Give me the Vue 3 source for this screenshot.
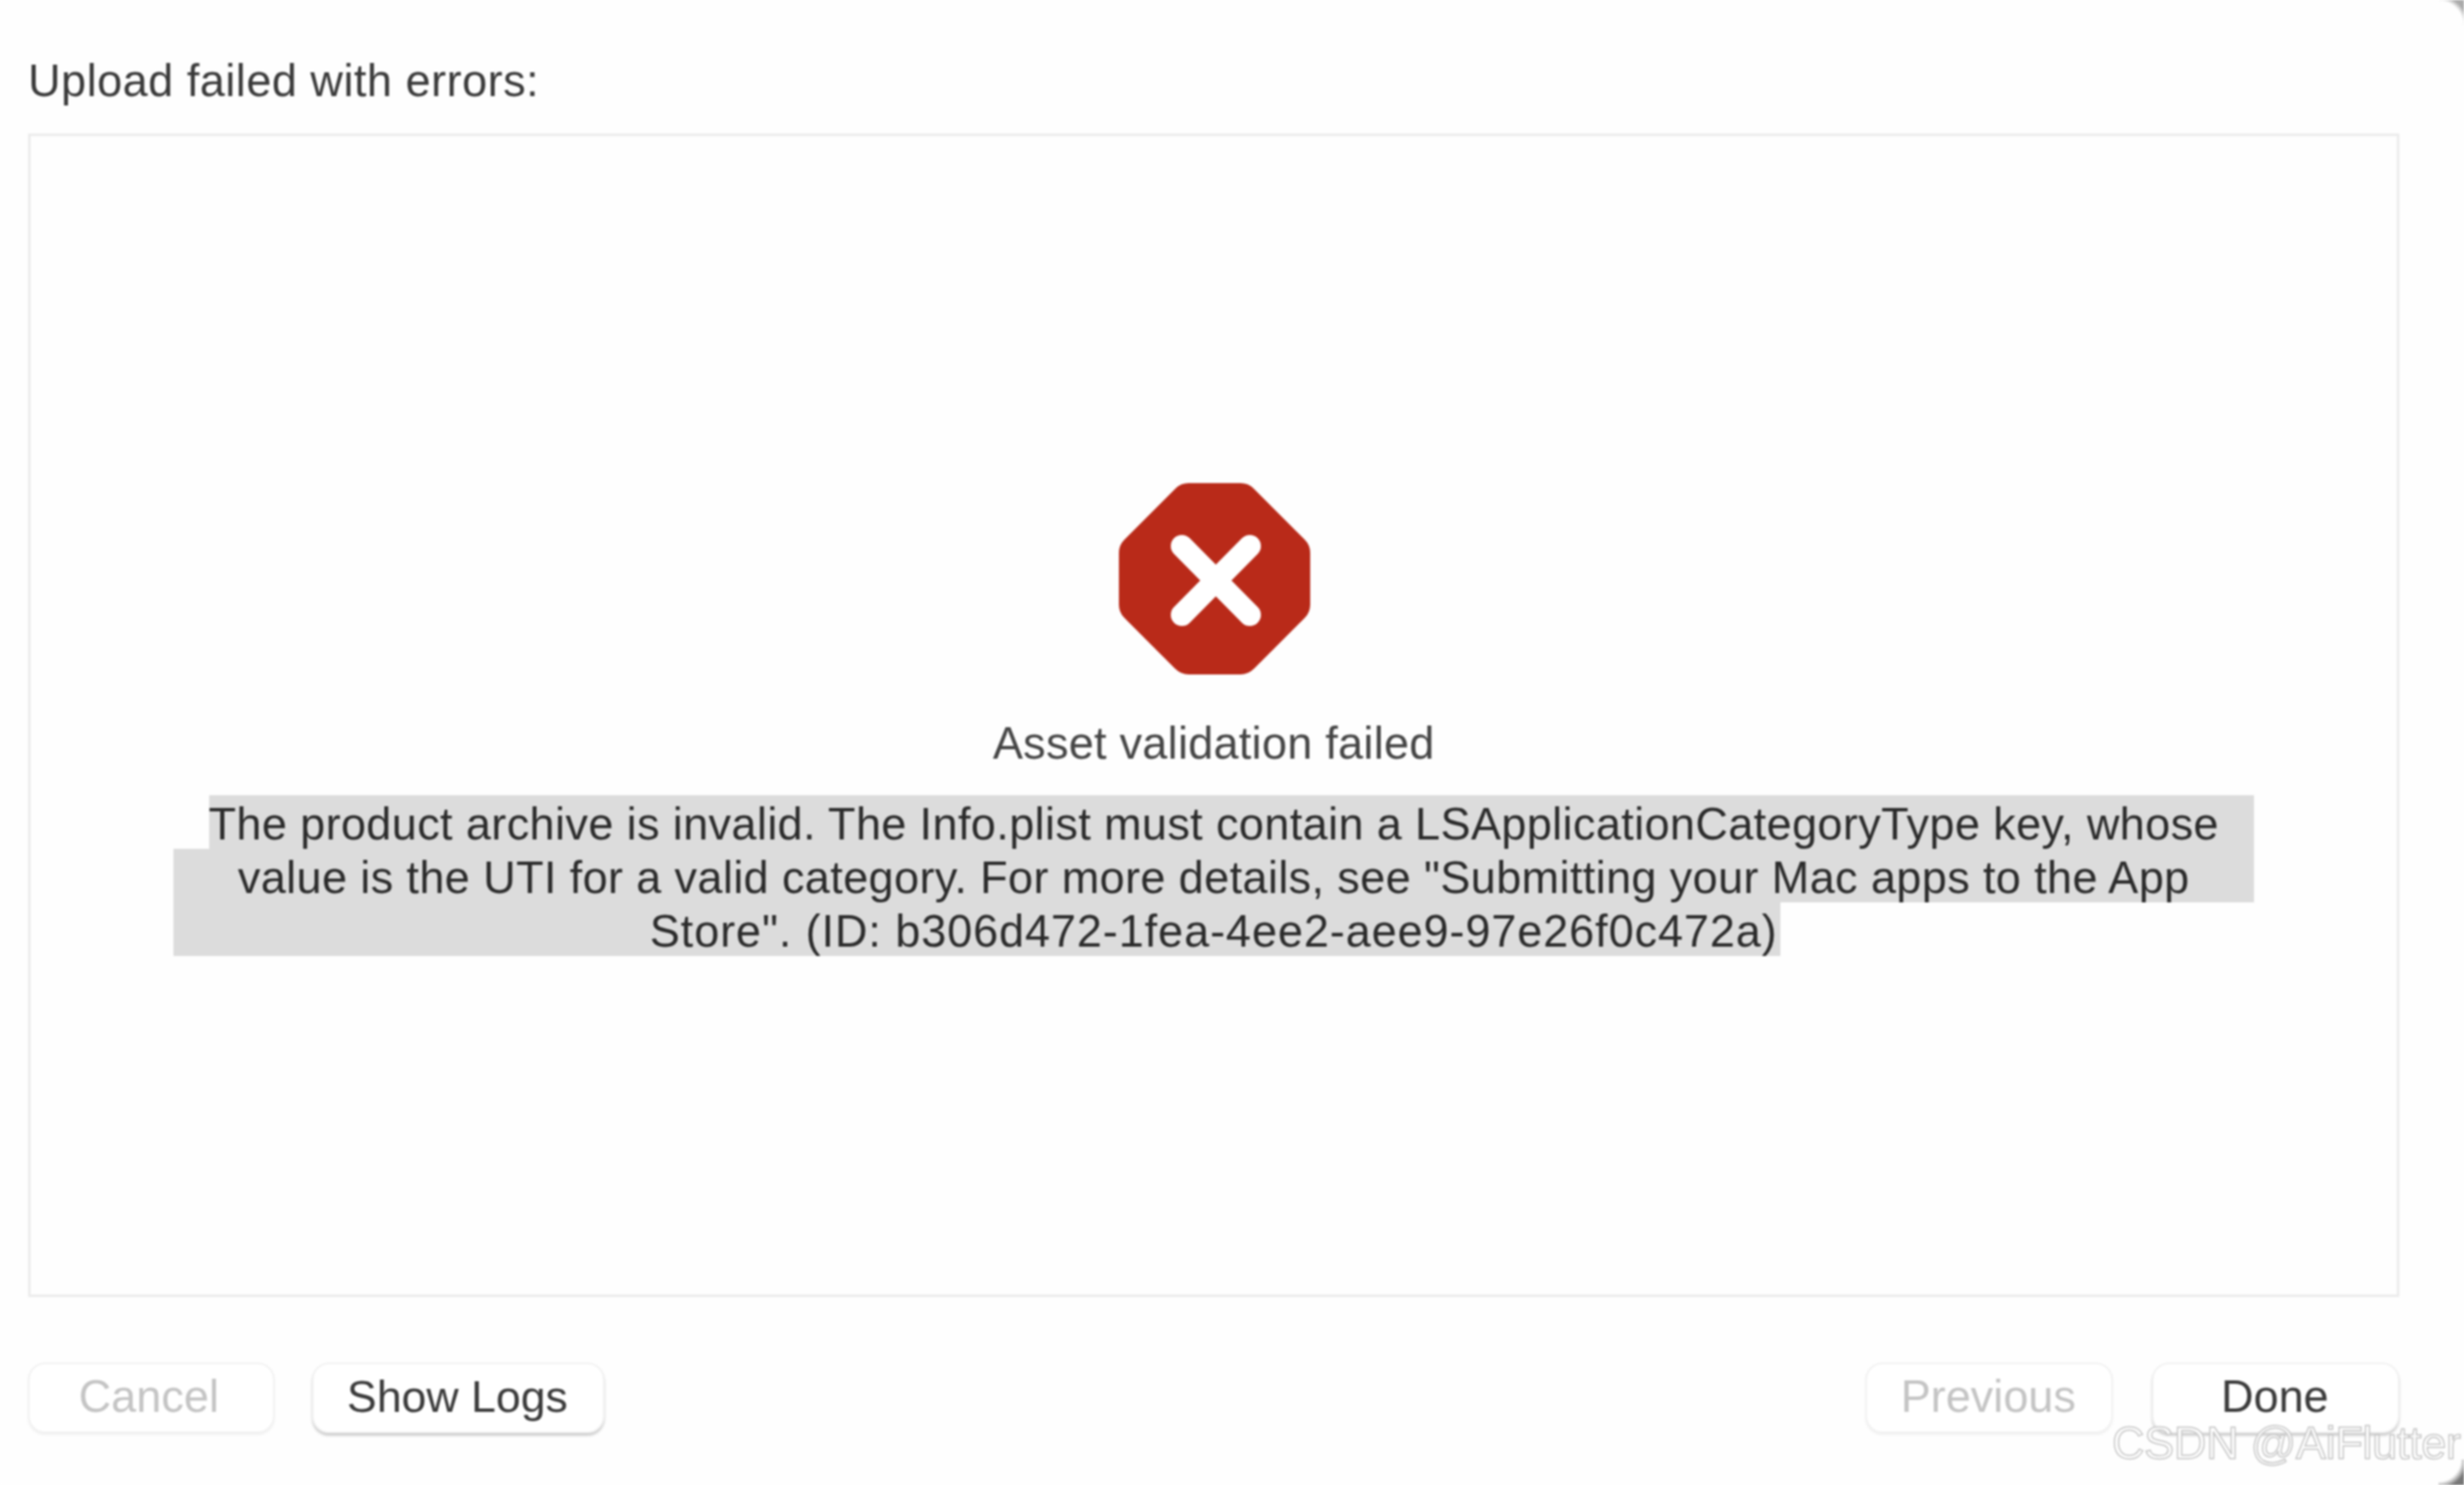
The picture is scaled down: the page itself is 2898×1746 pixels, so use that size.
<template>
  <div class="dialog">
    <div class="status-label">Upload failed with errors:</div>
    <div class="result-box">
      <svg class="error-icon" viewBox="0 0 225 225" width="225" height="225">
        <polygon
          points="82,22 143,22 203,82 203,143 143,203 82,203 22,143 22,82"
          fill="#b92a19"
          stroke="#b92a19"
          stroke-width="44"
          stroke-linejoin="round"
        />
        <path d="M74 74 L154 155 M154 74 L74 155" stroke="#fff" stroke-width="26" stroke-linecap="round" />
      </svg>
      <div class="result-title">Asset validation failed</div>
      <div class="result-message">
        <div v-for="(line, index) in messageLines" :key="index" :class="['line', line.cls]">{{ line.text }}</div>
      </div>
    </div>
    <div class="footer">
      <div class="btn-group">
        <button class="btn cancel" disabled>Cancel</button>
        <button class="btn raised">Show Logs</button>
      </div>
      <div class="btn-group">
        <button class="btn" disabled>Previous</button>
        <button class="btn raised">Done</button>
      </div>
    </div>
    <div class="watermark">CSDN @AiFlutter</div>
    <span class="corner corner-top"></span>
    <span class="corner corner-bottom"></span>
  </div>
</template>

<script setup>
const messageLines = [
  { text: 'The product archive is invalid. The Info.plist must contain a LSApplicationCategoryType key, whose', cls: 'first' },
  { text: 'value is the UTI for a valid category. For more details, see "Submitting your Mac apps to the App', cls: '' },
  { text: 'Store". (ID: b306d472-1fea-4ee2-aee9-97e26f0c472a)', cls: 'last' }
]
</script>

<style>
html, body {
  margin: 0;
  background: #fefefe;
}
</style>

<style scoped>
.dialog {
  position: relative;
  width: 2898px;
  height: 1746px;
  box-sizing: border-box;
  padding: 0 76px 0 33px;
  overflow: hidden;
  background: #fefefe;
  font-family: "Liberation Sans", Arial, sans-serif;
  color: #3a3a3a;
  filter: blur(0.9px);
}

.status-label {
  height: 157px;
  line-height: 190px;
  font-size: 53px;
  letter-spacing: 0.57px;
}

.result-box {
  box-sizing: border-box;
  height: 1368px;
  border: 3px solid #ececec;
  background: #fefefe;
  padding-top: 408px;
  display: flex;
  flex-direction: column;
  align-items: center;
}

.error-icon {
  display: block;
  flex: none;
  margin-left: 2px;
}

.result-title {
  margin-top: 49px;
  height: 64px;
  line-height: 64px;
  font-size: 53px;
  letter-spacing: 0.3px;
  color: #454545;
}

.result-message {
  margin-top: 29px;
  width: 2447px;
  font-size: 53px;
  letter-spacing: 0.43px;
  color: #2b2b2b;
}

.line {
  height: 63px;
  line-height: 68px;
  text-align: center;
  background: #dcdcdc;
}

.line.first {
  background: linear-gradient(to right, transparent 42px, #dcdcdc 42px);
}

.line.last {
  letter-spacing: 1.05px;
  background: linear-gradient(to right, #dcdcdc 1890px, transparent 1890px);
}

.footer {
  display: flex;
  justify-content: space-between;
  margin-top: 77px;
}

.btn-group {
  display: flex;
  gap: 46px;
}

.btn {
  width: 291px;
  height: 83px;
  padding: 0 2px 5px 0;
  border: 2px solid #f2f2f2;
  border-radius: 20px;
  background: #fff;
  font-family: inherit;
  font-size: 53px;
  color: #3a3a3a;
  box-shadow: 0 2px 3px rgba(0, 0, 0, 0.06);
}

.btn:disabled {
  color: #c4c4c4;
}

.btn.raised {
  box-shadow: 0 3px 3px rgba(0, 0, 0, 0.2);
}

.btn-group:first-child {
  gap: 44px;
}

.btn-group:first-child .btn {
  width: 290px;
}

.btn-group:first-child .btn.cancel {
  padding-right: 6px;
}

.btn-group:first-child .btn.raised {
  width: 344px;
  font-size: 52.5px;
}

.watermark {
  position: absolute;
  left: 2484px;
  top: 1670px;
  font-size: 53px;
  line-height: 54px;
  letter-spacing: -0.4px;
  white-space: nowrap;
  color: #fdfdfd;
  -webkit-text-stroke: 1.5px #c6c6c6;
}

.corner {
  position: absolute;
  right: 0;
  width: 30px;
  height: 30px;
}

.corner-top {
  top: 0;
  background: radial-gradient(circle at 0 100%, transparent 29px, #aaa 35px);
}

.corner-bottom {
  bottom: 0;
  background: radial-gradient(circle at 0 0, transparent 26px, #777 34px);
}
</style>
